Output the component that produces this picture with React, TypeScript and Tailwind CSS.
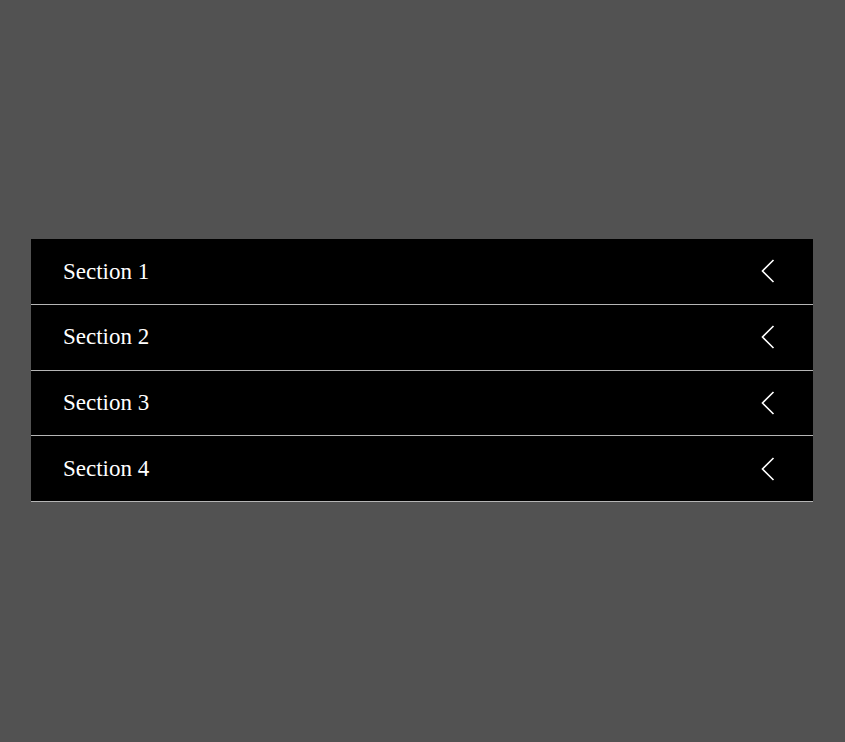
const sections = ["Section 1", "Section 2", "Section 3", "Section 4"]

const Chevron = () => (
    <svg width="14" height="24" viewBox="0 0 14 24" fill="none" className="shrink-0">
        <path d="M12.5 1 L1.5 12 L12.5 23" stroke="white" strokeWidth="1.6" />
    </svg>
)

const App = () => {
    return (
        <div className="w-full min-h-[742px] bg-[#525252] pt-[239px] px-[31px] pr-[32px]">
            <div className="bg-black">
                {sections.map((title) => (
                    <div
                        key={title}
                        className="flex items-center justify-between h-[65.75px] border-b border-[#b5b5b5] pl-[32px] pr-[38px] text-white"
                    >
                        <span className="text-[23px] pt-[1px] font-['Liberation_Serif',serif]">{title}</span>
                        <Chevron />
                    </div>
                ))}
            </div>
        </div>
    )
}

export default App
